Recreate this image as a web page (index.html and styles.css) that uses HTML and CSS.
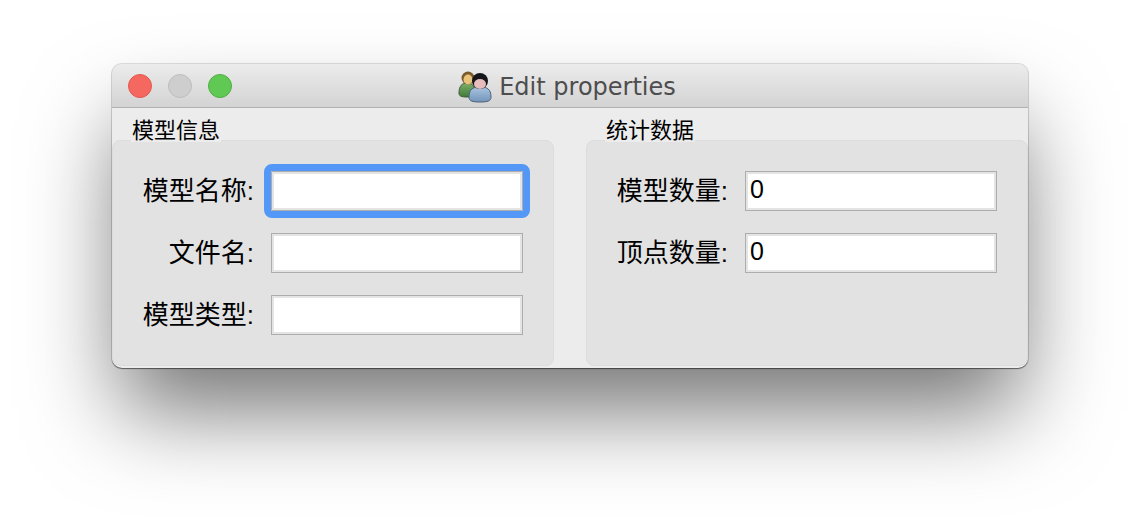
FILE: index.html
```html
<!DOCTYPE html>
<html lang="zh-CN">
<head>
<title>Edit properties</title>
<meta charset="utf-8">
<link rel="stylesheet" href="styles.css">
</head>
<body>
    <div class="window">
        <div class="titlebar">
            <div class="lights">
                <span class="light red"></span>
                <span class="light grey"></span>
                <span class="light green"></span>
            </div>
            <div class="title">
                <svg class="title-icon" width="34" height="32" viewBox="0 0 34 32">
                    <defs>
                        <linearGradient id="backBody" x1="0" y1="0" x2="0" y2="1">
                            <stop offset="0" stop-color="#7fb069"/>
                            <stop offset="1" stop-color="#3f7a3a"/>
                        </linearGradient>
                        <linearGradient id="frontBody" x1="0" y1="0" x2="0" y2="1">
                            <stop offset="0" stop-color="#a9c4e0"/>
                            <stop offset="1" stop-color="#7395ba"/>
                        </linearGradient>
                    </defs>
                    <path d="M1 22c0-7 3-10 8-10s8 3 8 10c0 3-2 4-8 4s-8-1-8-4z" fill="url(#backBody)" stroke="#3d5c35" stroke-width="1"/>
                    <circle cx="10" cy="7" r="6.500" fill="#7a5a2c"/>
                    <ellipse cx="10" cy="8.500" rx="4.500" ry="5" fill="#e9c27c"/>
                    <path d="M11 26c0-8 4-10 11-10s11 2 11 10c0 4-3 5-11 5s-11-1-11-5z" fill="url(#frontBody)" stroke="#4c6075" stroke-width="1"/>
                    <circle cx="22" cy="10" r="8" fill="#15151c"/>
                    <ellipse cx="22" cy="13" rx="6" ry="5" fill="#e6bcbc"/>
                </svg>
                <span>Edit properties</span>
            </div>
        </div>
        <div class="content">
            <div class="group">
                <div class="group-title"><span class="group-text">模型信息</span></div>
                <div class="group-box">
                    <div class="row">
                        <label class="label">模型名称:</label>
                        <div class="field focused"></div>
                    </div>
                    <div class="row">
                        <label class="label">文件名:</label>
                        <div class="field"></div>
                    </div>
                    <div class="row">
                        <label class="label">模型类型:</label>
                        <div class="field"></div>
                    </div>
                </div>
            </div>
            <div class="group">
                <div class="group-title"><span class="group-text">统计数据</span></div>
                <div class="group-box">
                    <div class="row">
                        <label class="label">模型数量:</label>
                        <div class="field">0</div>
                    </div>
                    <div class="row">
                        <label class="label">顶点数量:</label>
                        <div class="field">0</div>
                    </div>
                </div>
            </div>
        </div>
    </div>
</body>
</html>
```

FILE: styles.css
```css
@charset "utf-8";

* {
    margin: 0;
    box-sizing: border-box;
}

html {
    height: 100%;
}

body {
    background: #ffffff;
    height: 100%;
    padding: 64px 112px 0;
    overflow: hidden;
    font-family: "Liberation Sans", "Noto Sans CJK SC", sans-serif;
    color: #000000;
}

.window {
    width: 916px;
    height: 304px;
    background: #ececec;
    border-radius: 10px;
    box-shadow: 0 0 0 1px rgba(0, 0, 0, 0.12), 0 1px 1px rgba(0, 0, 0, 0.45), 0 50px 90px -8px rgba(0, 0, 0, 0.55);
    overflow: hidden;
}

.titlebar {
    position: relative;
    height: 44px;
    background: linear-gradient(#ececec, #d3d3d3);
    border-bottom: 1px solid #b1b1b1;
    display: flex;
    align-items: center;
    justify-content: center;
}

.lights {
    position: absolute;
    left: 16px;
    top: 10px;
    display: flex;
    gap: 16px;
}

.light {
    width: 24px;
    height: 24px;
    border-radius: 50%;
    border: 1px solid;
}

.red {
    background: #f5685f;
    border-color: #e2574f;
}

.grey {
    background: #cecece;
    border-color: #bdbdbd;
}

.green {
    background: #60c954;
    border-color: #50ad45;
}

.title {
    display: flex;
    align-items: center;
    gap: 7px;
    font-family: "DejaVu Sans", sans-serif;
    font-size: 24px;
    color: #4d4d4d;
    padding: 2px 6px 0 0;
}

.title-icon {
    filter: blur(0.6px);
}

.content {
    display: flex;
    gap: 32px;
}

.group {
    flex: 1;
}

.group-title {
    height: 32px;
    padding: 10px 0 0 19px;
    font-size: 22px;
    line-height: 26px;
    white-space: nowrap;
    position: relative;
}

.group-text {
    display: inline-block;
    background: #ececec;
    height: 24px;
    padding: 0 1px;
}

.group-box {
    height: 226px;
    background: #e2e2e2;
    border: 1px solid #dcdcdc;
    border-radius: 8px;
    padding: 30px 30px 0 0;
    display: flex;
    flex-direction: column;
    gap: 22px;
}

.row {
    display: flex;
    align-items: center;
    justify-content: flex-end;
    gap: 17px;
    height: 40px;
}

.label {
    font-size: 26px;
    line-height: 34px;
    padding-bottom: 1px;
    white-space: nowrap;
}

.field {
    width: 252px;
    height: 40px;
    background: #ffffff;
    border: 1px solid #adadad;
    box-shadow: inset 0 0 0 2px #e4e4e4;
    padding-left: 4px;
    font-size: 25px;
    line-height: 34px;
}

.focused {
    outline: 7px solid #5398f6;
    border-radius: 1px;
    outline-offset: 0;
}
```
